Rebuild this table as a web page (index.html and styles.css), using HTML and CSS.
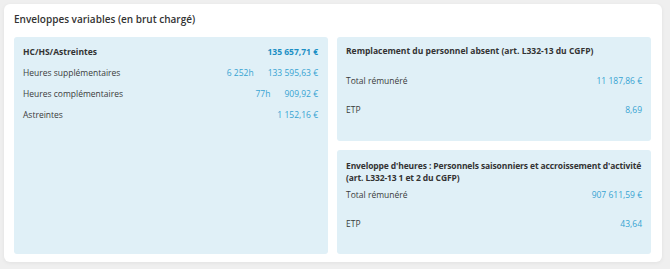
FILE: index.html
```html
<!DOCTYPE html>
<html lang="fr">
<head>
<meta charset="utf-8">
<link rel="stylesheet" href="styles.css">
</head>
<body>
<div class="card">
  <div class="card-title">Enveloppes variables (en brut chargé)</div>
  <div class="grid">
    <div class="panel panel-left">
      <div class="row row-head">
        <span class="label strong">HC/HS/Astreintes</span>
        <span class="vals"><span class="val strong-val">135 657,71 €</span></span>
      </div>
      <div class="row">
        <span class="label">Heures supplémentaires</span>
        <span class="vals"><span class="val">6 252h</span><span class="val">133 595,63 €</span></span>
      </div>
      <div class="row">
        <span class="label">Heures complémentaires</span>
        <span class="vals"><span class="val">77h</span><span class="val">909,92 €</span></span>
      </div>
      <div class="row">
        <span class="label">Astreintes</span>
        <span class="vals"><span class="val">1 152,16 €</span></span>
      </div>
    </div>
    <div class="panel panel-top">
      <div class="ptitle">Remplacement du personnel absent (art. L332-13 du CGFP)</div>
      <div class="prow first"><span class="label">Total rémunéré</span><span class="val">11 187,86 €</span></div>
      <div class="prow"><span class="label">ETP</span><span class="val">8,69</span></div>
    </div>
    <div class="panel panel-bottom">
      <div class="ptitle ptitle-tight">Enveloppe d'heures : Personnels saisonniers et accroissement d'activité (art. L332-13 1 et 2 du CGFP)</div>
      <div class="prow first2"><span class="label">Total rémunéré</span><span class="val">907 611,59 €</span></div>
      <div class="prow second2"><span class="label">ETP</span><span class="val">43,64</span></div>
    </div>
  </div>
</div>
</body>
</html>
```
FILE: styles.css
```css
* { box-sizing: border-box; }
html, body { margin: 0; }
body {
  background: #efefef;
  font-family: "Open Sans", "Noto Sans", sans-serif;
  color: #3b3b3b;
  width: 670px;
  height: 269px;
  overflow: hidden;
  padding: 4px 0 0 4px;
}
.card {
  width: 658px;
  height: 258px;
  background: #fff;
  border-radius: 6px;
  box-shadow: 0 1px 4px rgba(0,0,0,0.06);
  padding: 0 10px 8px 10px;
  display: flex;
  flex-direction: column;
}
.card-title {
  height: 33px;
  display: flex;
  align-items: center;
  font-size: 10px;
  font-weight: 600;
  color: #333;
  padding-bottom: 3px;
}
.grid {
  flex: 1;
  display: grid;
  grid-template-columns: 314px 314px;
  grid-template-rows: 104px 104px;
  column-gap: 9px;
  row-gap: 9px;
}
.panel {
  background: #e0f0f7;
  border-radius: 3px;
}
.panel-left {
  grid-row: 1 / span 2;
  padding: 6px 10px 0 9px;
}
.row {
  display: flex;
  justify-content: space-between;
  align-items: center;
  height: 21px;
  font-size: 8.5px;
}
.row-head { height: 16px; margin-bottom: 3px; }
.vals { display: flex; gap: 14px; }
.val { color: #36a3d2; font-size: 8.5px; }
.strong { font-weight: 700; color: #333; }
.strong-val { font-weight: 700; color: #1c8fc4; }
.label { font-size: 8.5px; }
.panel-top { padding: 8px 9px 0 9px; }
.panel-bottom { padding: 10px 8px 0 9px; }
.ptitle {
  font-size: 8.5px;
  font-weight: 700;
  color: #333;
  line-height: 12px;
}
.ptitle-tight { letter-spacing: -0.12px; }
.prow {
  display: flex;
  justify-content: space-between;
  align-items: center;
  height: 29px;
  font-size: 8.5px;
}
.panel-top .prow.first { margin-top: 9px; }
.panel-bottom .prow { padding-right: 1px; }
.prow.first2 { height: 17px; margin-top: 2px; }
.prow.second2 { margin-top: 12px; height: 17px; }
```
